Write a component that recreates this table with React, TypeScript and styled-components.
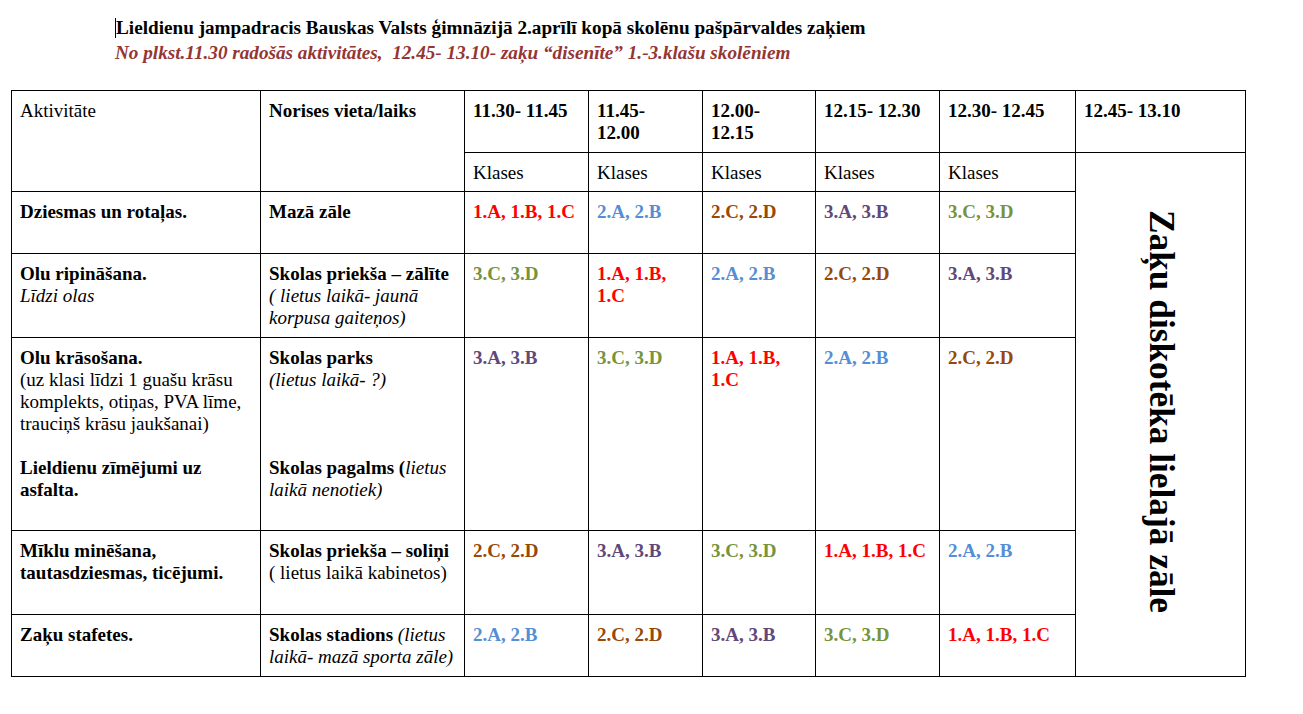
import React from "react";
import styled, { createGlobalStyle } from "styled-components";

const GlobalStyle = createGlobalStyle`
  html, body { margin: 0; padding: 0; background: #ffffff; }
  body {
    font-family: "Liberation Serif", "Times New Roman", serif;
    color: #000000;
  }
`;

const Page = styled.div`
  padding: 15px 0 0 11px;
`;

const Heading = styled.div`
  margin-left: 104px;
  font-size: 19.2px;
  line-height: 25px;
`;

const Title = styled.div`
  font-weight: bold;
  white-space: nowrap;
`;

const Caret = styled.span`
  display: inline-block;
  width: 1px;
  height: 20px;
  background: #000;
  vertical-align: -4px;
`;

const Subtitle = styled.div`
  font-weight: bold;
  font-style: italic;
  color: #943634;
  white-space: pre;
`;

const Table = styled.table`
  margin-top: 25px;
  border-collapse: collapse;
  table-layout: fixed;
  width: 1235px;
  font-size: 19px;
  line-height: 22px;
`;

const Cell = styled.td<{ $bold?: boolean; $short?: boolean }>`
  border: 1px solid #000;
  padding: 9px 10px ${(p) => (p.$short ? "7px" : "8px")} 8px;
  vertical-align: top;
  text-align: left;
  font-weight: ${(p) => (p.$bold ? "bold" : "normal")};
`;

const SideCell = styled.td`
  border: 1px solid #000;
  padding: 0;
  vertical-align: middle;
  text-align: center;
`;

const Vertical = styled.span`
  display: inline-block;
  writing-mode: vertical-rl;
  font-size: 35.3px;
  line-height: 40px;
  font-weight: bold;
  white-space: nowrap;
`;

const Para = styled.div<{ $bold?: boolean; $italic?: boolean }>`
  min-height: 22px;
  font-weight: ${(p) => (p.$bold ? "bold" : "normal")};
  font-style: ${(p) => (p.$italic ? "italic" : "normal")};
`;

const Em = styled.span`
  font-style: italic;
  font-weight: normal;
`;

type Tone = "red" | "blue" | "brown" | "purple" | "green";

const toneColor: Record<Tone, string> = {
  red: "#ff0000",
  blue: "#558ed5",
  brown: "#984807",
  purple: "#5f497a",
  green: "#77933c",
};

const Group = styled.span<{ $tone: Tone }>`
  font-weight: bold;
  color: ${(p) => toneColor[p.$tone]};
`;

const groupText: Record<Tone, string> = {
  red: "1.A, 1.B, 1.C",
  blue: "2.A, 2.B",
  brown: "2.C, 2.D",
  purple: "3.A, 3.B",
  green: "3.C, 3.D",
};

const Blank = () => <Para>&nbsp;</Para>;

const ClassCells = ({ tones, short }: { tones: Tone[]; short?: boolean }) => (
  <>
    {tones.map((t, i) => (
      <Cell key={i} $short={short}>
        <Group $tone={t}>{groupText[t]}</Group>
      </Cell>
    ))}
  </>
);

const colWidths = [249, 204, 124, 114, 113, 124, 136, 170];

export default function App() {
  return (
    <>
      <GlobalStyle />
      <Page>
        <Heading>
          <Title>
            <Caret />
            Lieldienu jampadracis Bauskas Valsts ģimnāzijā 2.aprīlī kopā skolēnu pašpārvaldes zaķiem
          </Title>
          <Subtitle>
            {"No plkst.11.30 radošās aktivitātes,  12.45- 13.10- zaķu “disenīte” 1.-3.klašu skolēniem"}
          </Subtitle>
        </Heading>
        <Table>
          <colgroup>
            {colWidths.map((w, i) => (
              <col key={i} style={{ width: w }} />
            ))}
          </colgroup>
          <tbody>
            <tr>
              <Cell rowSpan={2}>Aktivitāte</Cell>
              <Cell rowSpan={2} $bold>
                Norises vieta/laiks
              </Cell>
              <Cell $bold>11.30- 11.45</Cell>
              <Cell $bold>11.45- 12.00</Cell>
              <Cell $bold>12.00- 12.15</Cell>
              <Cell $bold>12.15- 12.30</Cell>
              <Cell $bold>12.30- 12.45</Cell>
              <Cell $bold>12.45- 13.10</Cell>
            </tr>
            <tr>
              <Cell $short>Klases</Cell>
              <Cell $short>Klases</Cell>
              <Cell $short>Klases</Cell>
              <Cell $short>Klases</Cell>
              <Cell $short>Klases</Cell>
              <SideCell rowSpan={6}>
                <Vertical>Zaķu diskotēka lielajā zāle</Vertical>
              </SideCell>
            </tr>
            <tr>
              <Cell>
                <Para $bold>Dziesmas un rotaļas.</Para>
                <Blank />
              </Cell>
              <Cell>
                <Para $bold>Mazā zāle</Para>
              </Cell>
              <ClassCells tones={["red", "blue", "brown", "purple", "green"]} />
            </tr>
            <tr>
              <Cell>
                <Para $bold>Olu ripināšana.</Para>
                <Para $italic>Līdzi olas</Para>
              </Cell>
              <Cell>
                <Para $bold>Skolas priekša – zālīte</Para>
                <Para $italic>( lietus laikā- jaunā korpusa gaiteņos)</Para>
              </Cell>
              <ClassCells tones={["green", "red", "blue", "brown", "purple"]} />
            </tr>
            <tr>
              <Cell $short>
                <Para $bold>Olu krāsošana.</Para>
                <Para>(uz klasi līdzi 1 guašu krāsu komplekts, otiņas, PVA līme, trauciņš krāsu jaukšanai)</Para>
                <Blank />
                <Para $bold>Lieldienu zīmējumi uz asfalta.</Para>
                <Blank />
              </Cell>
              <Cell $short>
                <Para $bold>Skolas parks</Para>
                <Para $italic>(lietus laikā- ?)</Para>
                <Blank />
                <Blank />
                <Blank />
                <Para $bold>
                  Skolas pagalms (<Em>lietus laikā nenotiek)</Em>
                </Para>
              </Cell>
              <ClassCells short tones={["purple", "green", "red", "blue", "brown"]} />
            </tr>
            <tr>
              <Cell>
                <Para $bold>Mīklu minēšana, tautasdziesmas, ticējumi.</Para>
                <Blank />
              </Cell>
              <Cell>
                <Para $bold>Skolas priekša – soliņi</Para>
                <Para>( lietus laikā kabinetos)</Para>
              </Cell>
              <ClassCells tones={["brown", "purple", "green", "red", "blue"]} />
            </tr>
            <tr>
              <Cell>
                <Para $bold>Zaķu stafetes.</Para>
              </Cell>
              <Cell>
                <Para $bold>
                  Skolas stadions <Em>(lietus laikā- mazā sporta zāle)</Em>
                </Para>
              </Cell>
              <ClassCells tones={["blue", "brown", "purple", "green", "red"]} />
            </tr>
          </tbody>
        </Table>
      </Page>
    </>
  );
}
